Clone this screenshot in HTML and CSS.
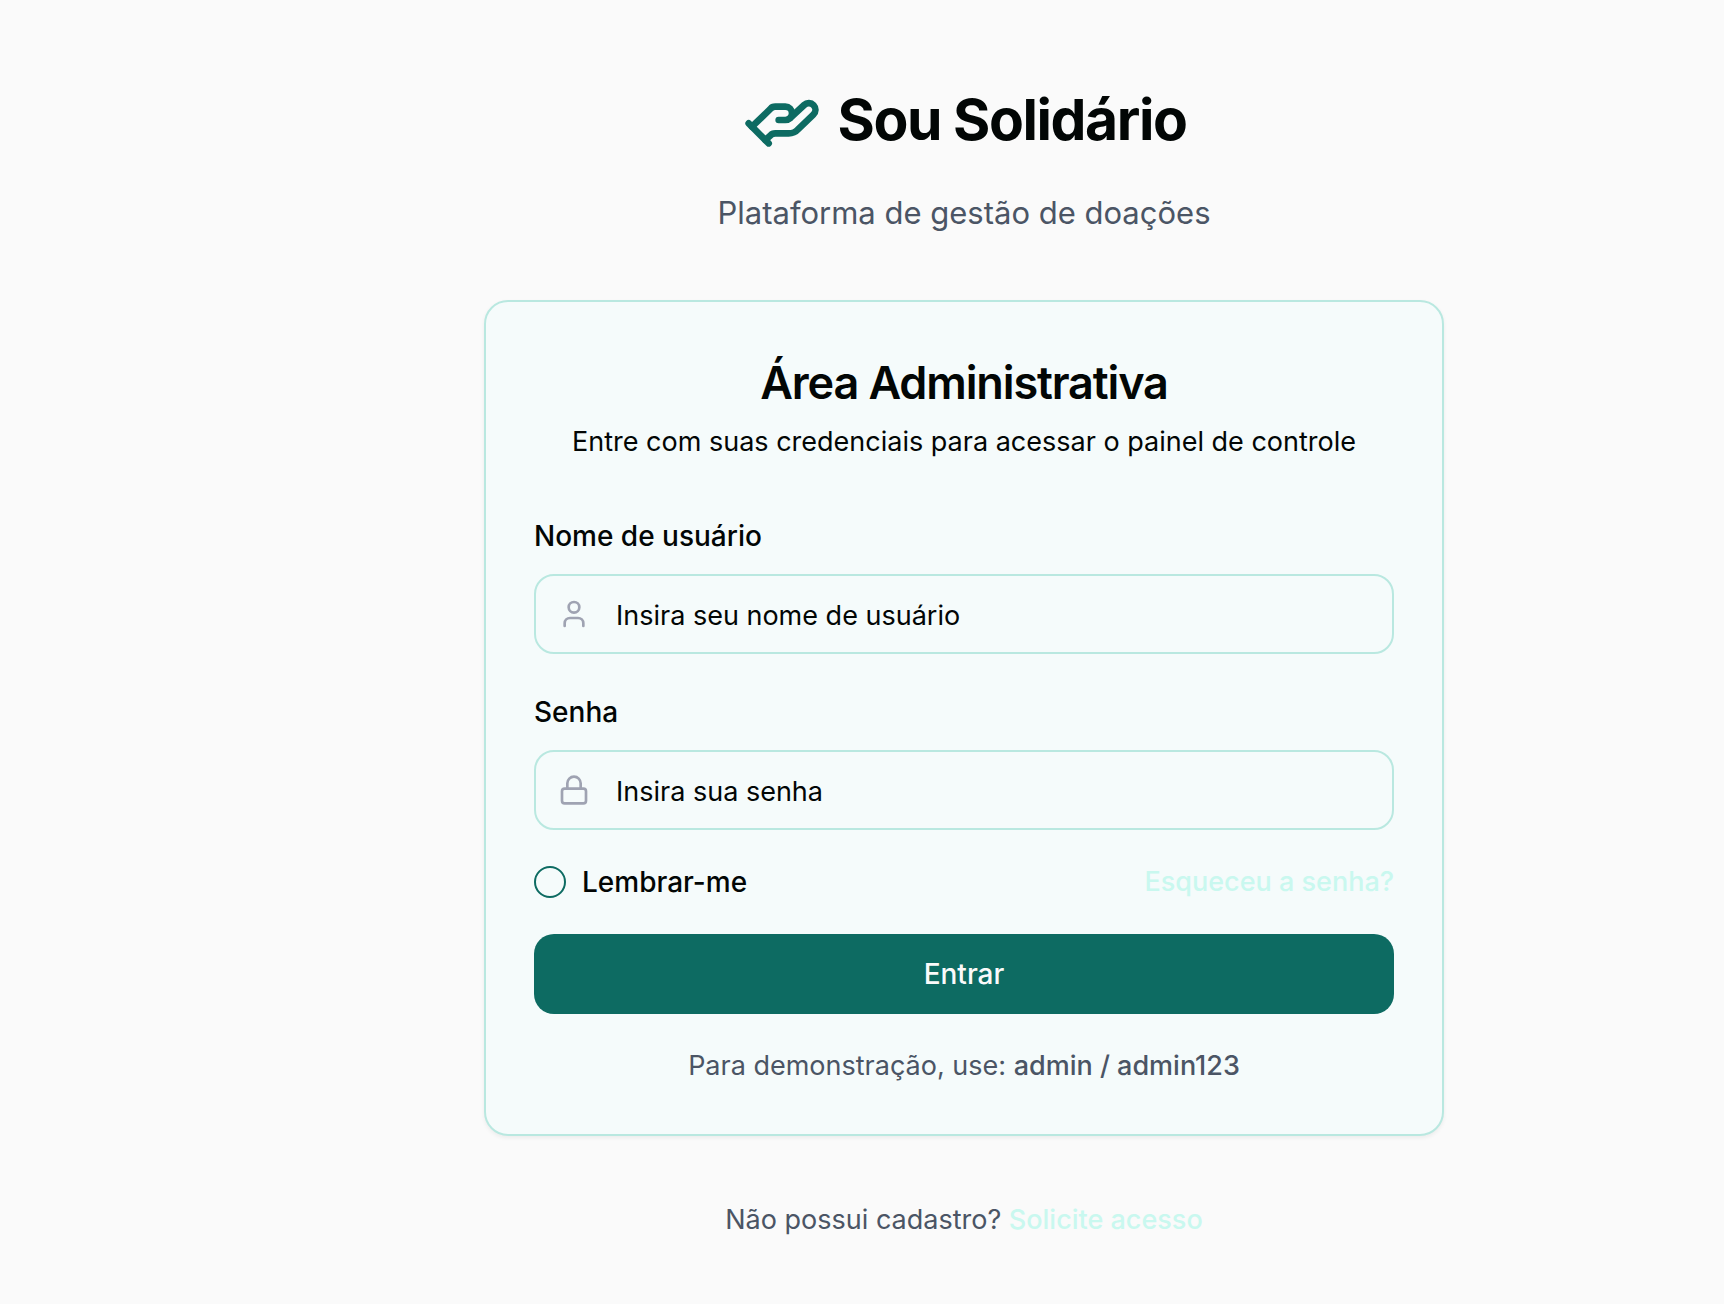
FILE: index.html
```html
<!DOCTYPE html>
<html lang="pt-BR">
<head>
  <meta charset="utf-8">
  <meta name="viewport" content="width=device-width, initial-scale=1">
  <title>Sou Solidário</title>
  <link rel="stylesheet" href="styles.css">
</head>
<body>
  <main class="page">
    <header class="brand">
      <div class="brand-row">
        <svg class="brand-icon" viewBox="0 0 24 24" aria-hidden="true">
          <path d="M11 12h2a2 2 0 1 0 0-4h-3c-.6 0-1.1.2-1.4.6L3 14"/>
          <path d="m7 18 1.6-1.4c.3-.4.8-.6 1.4-.6h4c1.1 0 2.1-.4 2.8-1.2l4.6-4.4a2 2 0 0 0-2.75-2.91l-4.2 3.9"/>
          <path d="m2 13 6 6"/>
        </svg>
        <h1 class="brand-name">Sou Solidário</h1>
      </div>
      <p class="tagline">Plataforma de gestão de doações</p>
    </header>

    <section class="card">
      <h2 class="card-title">Área Administrativa</h2>
      <p class="card-text">Entre com suas credenciais para acessar o painel de controle</p>
      <form class="form">
        <div class="field">
          <label class="label" for="username">Nome de usuário</label>
          <div class="control">
            <svg class="control-icon" viewBox="0 0 24 24" aria-hidden="true">
              <path d="M19 21v-2a4 4 0 0 0-4-4H9a4 4 0 0 0-4 4v2"/>
              <circle cx="12" cy="7" r="4"/>
            </svg>
            <input class="input" id="username" type="text" placeholder="Insira seu nome de usuário">
          </div>
        </div>
        <div class="field">
          <label class="label" for="password">Senha</label>
          <div class="control">
            <svg class="control-icon" viewBox="0 0 24 24" aria-hidden="true">
              <rect x="3" y="11" width="18" height="11" rx="2"/>
              <path d="M7 11V7a5 5 0 0 1 10 0v4"/>
            </svg>
            <input class="input" id="password" type="password" placeholder="Insira sua senha">
          </div>
        </div>
        <div class="options">
          <div class="remember">
            <input class="check" id="remember" type="checkbox">
            <label class="remember-label" for="remember">Lembrar-me</label>
          </div>
          <a class="link" href="#">Esqueceu a senha?</a>
        </div>
        <button class="submit" type="submit">Entrar</button>
      </form>
      <p class="hint">Para demonstração, use: <span class="strong">admin / admin123</span></p>
    </section>

    <p class="signup">Não possui cadastro? <a class="link" href="#">Solicite acesso</a></p>
  </main>
</body>
</html>
```
FILE: styles.css
```css
* {
  box-sizing: border-box;
}

body,
h1,
h2,
p {
  margin: 0;
}

body {
  min-height: 100vh;
  background: #fafafa;
  color: #020605;
  font-family: Inter, "Liberation Sans", sans-serif;
  font-size: 27px;
  line-height: 40px;
}

.page {
  display: flex;
  flex-direction: column;
  align-items: center;
  gap: 64px;
  padding: 80px 0 64px 204px;
}

.brand {
  display: flex;
  flex-direction: column;
  align-items: center;
  gap: 30px;
}

.brand-row {
  display: flex;
  align-items: center;
  gap: 16px;
}

.brand-icon,
.control-icon {
  fill: none;
  stroke: #0d6b62;
  stroke-width: 2;
  stroke-linecap: round;
  stroke-linejoin: round;
}

.brand-icon {
  width: 80px;
  height: 80px;
}

.brand-name {
  font-size: 57px;
  font-weight: 700;
  line-height: 72px;
  letter-spacing: -0.025em;
}

.tagline {
  color: #4b5565;
  font-size: 31px;
  line-height: 46px;
}

.card {
  width: 100%;
  max-width: 960px;
  padding: 48px;
  border: 2px solid #b9e8e0;
  border-radius: 24px;
  background: #f5fbfb;
  box-shadow: 0 2px 4px rgba(0, 0, 0, 0.06);
}

.card-title {
  margin-bottom: 6px;
  font-size: 45px;
  font-weight: 600;
  line-height: 66px;
  letter-spacing: -0.025em;
  text-align: center;
}

.card-text {
  margin-bottom: 60px;
  text-align: center;
}

.form {
  display: flex;
  flex-direction: column;
}

.field {
  display: flex;
  flex-direction: column;
  gap: 24px;
}

.field + .field {
  margin-top: 44px;
}

.label {
  font-size: 28px;
  font-weight: 500;
  line-height: 28px;
}

.control {
  display: grid;
  align-items: center;
}

.control-icon,
.input {
  grid-area: 1 / 1;
}

.control-icon {
  width: 32px;
  height: 32px;
  margin-left: 24px;
  stroke: #9fa3b2;
}

.input {
  width: 100%;
  height: 80px;
  padding: 2px 24px 0 80px;
  border: 2px solid #b9e8e0;
  border-radius: 20px;
  background: transparent;
  color: inherit;
  font: inherit;
}

.input::placeholder {
  color: #020605;
  opacity: 1;
}

.options {
  display: flex;
  align-items: center;
  justify-content: space-between;
  margin: 32px 0;
}

.remember {
  display: flex;
  align-items: center;
  gap: 16px;
}

.check {
  width: 32px;
  height: 32px;
  margin: 0;
  border: 2px solid #0d6b62;
  border-radius: 50%;
  appearance: none;
}

.check:checked {
  background: #0d6b62;
}

.remember-label {
  font-size: 28px;
  font-weight: 500;
}

.link {
  color: #c9f8ef;
  font-weight: 500;
  text-decoration: none;
}

.submit {
  height: 80px;
  border: 0;
  border-radius: 20px;
  background: #0d6b62;
  color: #fafafa;
  font: inherit;
  font-size: 28px;
  font-weight: 500;
}

.hint {
  margin-top: 32px;
  color: #4b5565;
  text-align: center;
}

.strong {
  font-weight: 500;
}

.signup {
  color: #4b5565;
}
```
